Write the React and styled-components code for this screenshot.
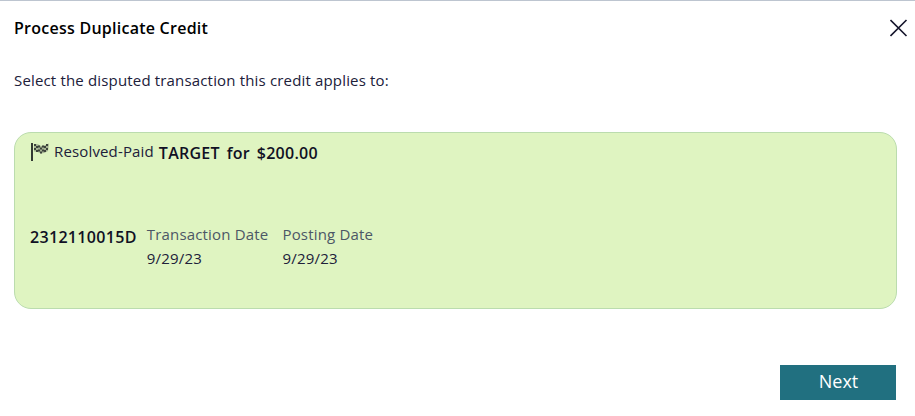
import React from 'react';
import styled, { createGlobalStyle } from 'styled-components';

const transaction = {
  id: '2312110015D',
  status: 'Resolved-Paid',
  title: 'TARGET for $200.00',
  dates: [
    { label: 'Transaction Date', value: '9/29/23' },
    { label: 'Posting Date', value: '9/29/23' },
  ],
};

const CloseIcon = () => (
  <svg width="18" height="18" viewBox="0 0 18 18">
    <path d="M0.5 1 L16.5 17 M16.5 1 L0.5 17" stroke="#14142b" strokeWidth="1.6" fill="none" />
  </svg>
);

const squares = [
  [4, 1.5], [8, 3], [12, 3], [16, 1.5],
  [6, 3.5], [10, 5], [14, 3.5],
  [4, 5.5], [8, 7], [12, 7], [16, 5.5],
  [6, 7.5], [10, 9], [14, 7.5],
];

const FlagIcon = () => (
  <svg width="19" height="19" viewBox="0 0 19 19">
    <rect x="0" y="0" width="2" height="18" fill="#333a33" />
    <path d="M3 1.5 Q6 0 10 3 Q14 2.5 18 0.5 L17 8 Q13 10.5 10 10.5 Q6 8 3 8.5 Z" fill="#a5b392" />
    {squares.map(([x, y]) => (
      <rect key={`${x}-${y}`} x={x - 1} y={y - 0.5} width="2" height="2" fill="#3d443c" />
    ))}
  </svg>
);

const App = () => (
  <>
    <GlobalStyle />
    <Dialog>
      <Header>
        <Title>Process Duplicate Credit</Title>
        <CloseButton aria-label="Close"><CloseIcon /></CloseButton>
      </Header>
      <Instructions>Select the disputed transaction this credit applies to:</Instructions>
      <Card>
        <Summary>
          <FlagIcon />
          <Status>{transaction.status}</Status>
          <Strong $spacing="0.25px" $word="2.5px">{transaction.title}</Strong>
        </Summary>
        <Details>
          <Strong $spacing="0.32px">{transaction.id}</Strong>
          {transaction.dates.map(({ label, value }) => (
            <DateField key={label}>
              <Label>{label}</Label>
              <Value>{value}</Value>
            </DateField>
          ))}
        </Details>
      </Card>
      <Footer>
        <NextButton>Next</NextButton>
      </Footer>
    </Dialog>
  </>
);

export default App;

const GlobalStyle = createGlobalStyle`
  * {
    box-sizing: border-box;
  }

  body {
    margin: 0;
    background: #fff;
    color: #20203a;
    font-family: 'Open Sans', sans-serif;
    font-size: 15px;
  }
`

const Dialog = styled.div`
  height: 416px;
  border-top: 1px solid #bdc5d0;
  overflow: hidden;
`

const Header = styled.div`
  display: flex;
  justify-content: space-between;
  align-items: flex-start;
  padding: 16px 7px 0 14px;
`

const Title = styled.h1`
  margin: 0;
  color: #000;
  font-size: 16px;
  font-weight: 600;
  line-height: 22px;
  letter-spacing: 0.25px;
`

const CloseButton = styled.button`
  display: flex;
  margin-top: 2px;
  padding: 0;
  border: 0;
  background: none;
`

const Instructions = styled.p`
  margin: 30px 14px 0;
  line-height: 22px;
  letter-spacing: 0.165px;
`

const Card = styled.div`
  width: 883px;
  height: 177px;
  margin: 41px 0 0 14px;
  padding: 7px 15px;
  border: 1px solid #bbdcae;
  border-radius: 17px;
  background: #dff4c1;
`

const Summary = styled.div`
  display: flex;
  align-items: center;

  > svg {
    margin: 0 0 1px 1px;
  }
`

const Status = styled.span`
  margin: 0 5px 3px 4px;
  line-height: 22px;
  letter-spacing: 0.15px;
`

const Strong = styled.span`
  color: #101024;
  font-size: 16px;
  font-weight: 600;
  line-height: 24px;
  letter-spacing: ${props => props.$spacing};
  word-spacing: ${props => props.$word || 'normal'};
`

const Details = styled.div`
  display: flex;
  align-items: flex-start;
  margin-top: 60px;

  > ${Strong} {
    margin-right: 10px;
  }
`

const DateField = styled.div`
  display: flex;
  flex-direction: column;
  margin-right: 14px;
  line-height: 24px;
`

const Label = styled.span`
  margin-top: -3px;
  color: #4c5766;
  letter-spacing: 0.18px;
`

const Value = styled.span`
  letter-spacing: 0.2px;
`

const Footer = styled.div`
  display: flex;
  justify-content: flex-end;
  padding: 56px 19px 0 0;
`

const NextButton = styled.button`
  width: 116px;
  height: 35px;
  padding: 0 0 2px 1px;
  border: 0;
  background: #217080;
  color: #fff;
  font-family: inherit;
  font-size: 18px;
  line-height: 33px;
`
